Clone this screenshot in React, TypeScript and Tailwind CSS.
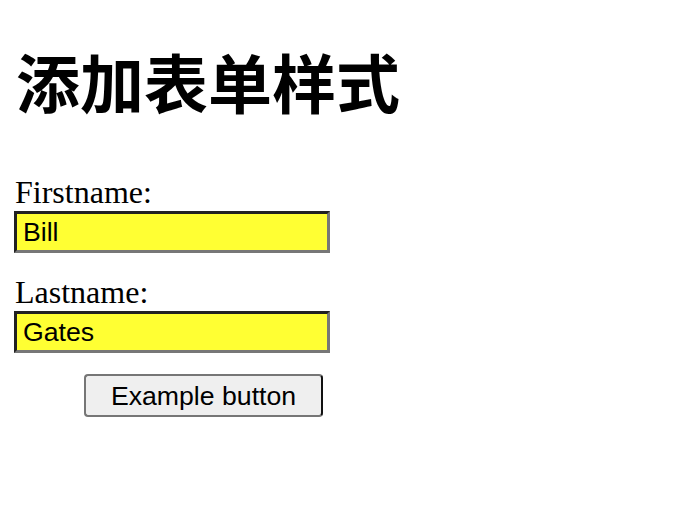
const labelCls = "ml-[1px] h-[37px] font-['Liberation_Serif',serif] text-[32px] leading-[37px]";
const inputCls =
    "block h-[42px] w-[316px] border-[3px] border-t-[#222] border-l-[#222] border-r-[#777] border-b-[#777] bg-[#ffff33] px-[6px] font-['Liberation_Sans',Arial,sans-serif] text-[26.67px] outline-none";

export default function App() {
    return (
        <div className="min-h-[514px] bg-white pl-[14px] pt-[48px] text-black">
            <h1 className="ml-[2px] font-['Noto_Sans_CJK_SC',sans-serif] text-[64px] leading-[64px] font-bold">
                添加表单样式
            </h1>
            <form className="mt-[62px] flex flex-col items-start">
                <div className={labelCls}>Firstname:</div>
                <input type="text" defaultValue="Bill" className={inputCls} />
                <div className={"mt-[21px] " + labelCls}>Lastname:</div>
                <input type="text" defaultValue="Gates" className={inputCls} />
                <button
                    type="button"
                    className="mt-[21px] ml-[70px] h-[43px] w-[239px] rounded-[4px] border-2 border-[#767676] border-r-[#111] bg-[#efefef] pb-[1px] font-['Liberation_Sans',Arial,sans-serif] text-[26.67px]"
                >
                    Example button
                </button>
            </form>
        </div>
    );
}
